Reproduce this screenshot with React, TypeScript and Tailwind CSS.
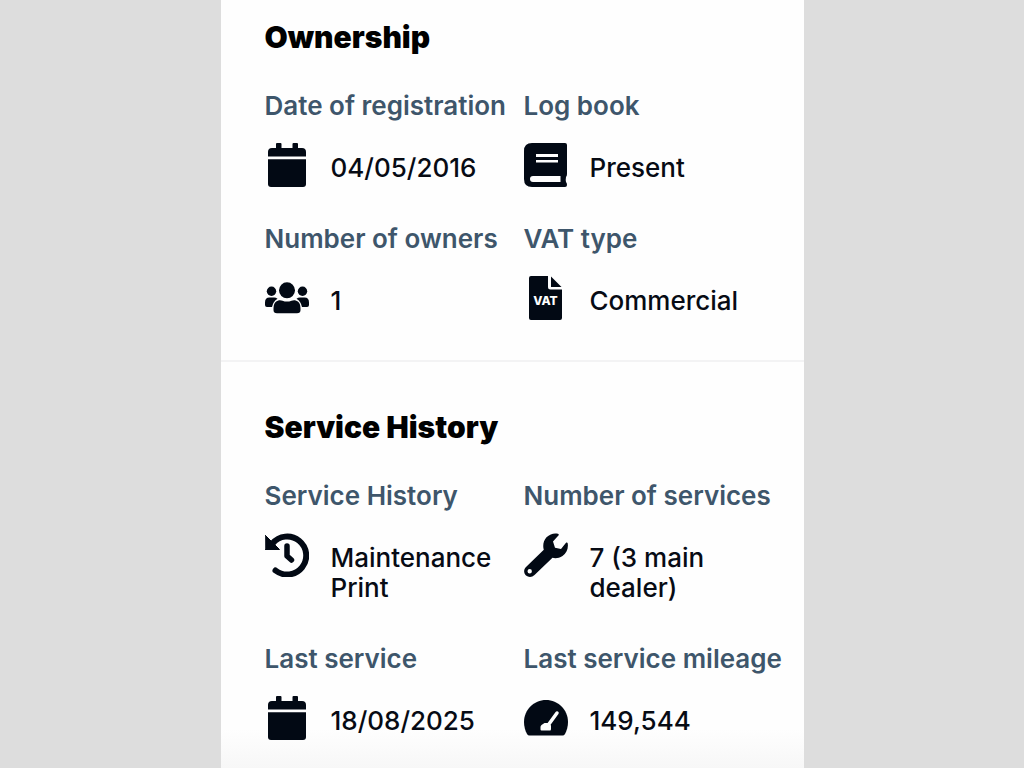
import React from 'react';

const iconClass = 'h-11 w-11 text-[#020914]';

const CalendarIcon = () => (
  <svg viewBox="0 0 44 44" className={iconClass} fill="currentColor" aria-hidden="true">
    <path d="M12 0H15.500Q16.500 0 16.500 1V5H27.500V1Q27.500 0 28.500 0H32Q33 0 33 1V5H37Q41 5 41 9V13.500H3V9Q3 5 7 5H11V1Q11 0 12 0Z" />
    <path d="M3 16.200H41V41Q41 44 38 44H6Q3 44 3 41Z" />
  </svg>
);

const BookIcon = () => (
  <svg viewBox="0 0 44 44" className={iconClass} fill="currentColor" aria-hidden="true">
    <path
      fillRule="evenodd"
      d="M8 0H41Q43 0 43 2V31Q43 33 42 34Q41.500 36.500 42 39Q43 40 43 42Q43 44 41 44H8Q0 44 0 36V8Q0 0 8 0ZM12 11V14H34V11ZM12 17V19.500H34V17ZM9 33Q6 33 6 36Q6 39 9 39H36.500V33Z"
    />
  </svg>
);

const UsersIcon = () => (
  <svg viewBox="0 0 44 44" className={iconClass} fill="currentColor" aria-hidden="true">
    <circle cx="22" cy="14.300" r="8" />
    <circle cx="6.500" cy="15.300" r="4.700" />
    <circle cx="37.500" cy="15.300" r="4.700" />
    <path d="M14 24.200Q16 24 17.500 24.700Q22 26.500 26.500 24.700Q28 24 30 24.200Q35.500 25.500 35.500 32V34Q35.500 37.300 32 37.300H12Q8.500 37.300 8.500 34V32Q8.500 25.500 14 24.200Z" />
    <path d="M4.500 21.500H9Q11 21.500 12.500 22.700Q8 25.500 7 31H2Q0 31 0 29V26.500Q0 21.500 4.500 21.500Z" />
    <path d="M39.500 21.500H35Q33 21.500 31.500 22.700Q36 25.500 37 31H42Q44 31 44 29V26.500Q44 21.500 39.500 21.500Z" />
  </svg>
);

const VatIcon = () => (
  <svg viewBox="0 0 44 44" className={iconClass} fill="currentColor" aria-hidden="true">
    <path d="M7 0H24V11Q24 13.500 26.500 13.500H38V42Q38 44 36 44H7Q5 44 5 42V2Q5 0 7 0Z" />
    <path d="M27 0.500L37.500 11H27Z" />
    <text x="21.500" y="28.500" textAnchor="middle" fill="#fefefe" className="font-['Inter'] text-[12px] font-extrabold">
      VAT
    </text>
  </svg>
);

const HistoryIcon = () => (
  <svg viewBox="0 0 44 44" className={iconClass} fill="none" stroke="currentColor" strokeLinecap="round" strokeLinejoin="round" aria-hidden="true">
    <path d="M7.500 10.500A19 19 0 1 1 10.500 37.500" strokeWidth="6" />
    <path d="M22 13V23L26.500 27" strokeWidth="5.500" />
    <path d="M0.500 2.500L14.500 16.500H0.500Z" fill="currentColor" strokeWidth="1" />
  </svg>
);

const WrenchIcon = () => (
  <svg viewBox="0 0 44 44" className={iconClass} fill="currentColor" aria-hidden="true">
    <path
      fillRule="evenodd"
      d="M34 0.800C35 1.200 35 2 34.400 2.600L29 8.500L31 14.800L37 16L42 9.700C42.600 9.100 43.500 9.400 43.700 10.200C44.600 15.500 42.500 20.500 38.500 23C35 25.200 31.500 25.800 28.500 24.800L10.500 42C8 44.500 4.500 44.500 2 42.500C-0.500 40 -0.500 36.500 2 34L19.800 16.800C18.500 12.500 19.500 7.500 22.500 4.200C26 0.800 30.500 -0.300 34 0.800ZM5.700 36A2.200 2.200 0 1 0 5.700 40.400A2.200 2.200 0 1 0 5.700 36Z"
    />
  </svg>
);

const GaugeIcon = () => (
  <svg viewBox="0 0 44 44" className={iconClass} aria-hidden="true">
    <path d="M22 4C9.800 4 0 13.800 0 26C0 30.200 1.100 34.400 3 38Q3.900 39.500 5.500 39.500H38.500Q40.100 39.500 41 38C42.900 34.400 44 30.200 44 26C44 13.800 34.200 4 22 4Z" fill="currentColor" />
    <path d="M33 17L25 28" stroke="#fefefe" strokeWidth="3.500" strokeLinecap="round" />
    <path d="M20.500 27H24.500L27 29.500V33Q27 34.500 26 34.500H17.500Q16.500 34.500 16.500 33.500V31Q16.500 30 17.500 29Z" fill="#fefefe" />
  </svg>
);

interface Detail {
  label: string;
  value: string;
  icon: React.ReactNode;
}

const ownership: Detail[] = [
  { label: 'Date of registration', value: '04/05/2016', icon: <CalendarIcon /> },
  { label: 'Log book', value: 'Present', icon: <BookIcon /> },
  { label: 'Number of owners', value: '1', icon: <UsersIcon /> },
  { label: 'VAT type', value: 'Commercial', icon: <VatIcon /> },
];

const serviceHistory: Detail[] = [
  { label: 'Service History', value: 'Maintenance Print', icon: <HistoryIcon /> },
  { label: 'Number of services', value: '7 (3 main dealer)', icon: <WrenchIcon /> },
  { label: 'Last service', value: '18/08/2025', icon: <CalendarIcon /> },
  { label: 'Last service mileage', value: '149,544', icon: <GaugeIcon /> },
];

const DetailSection: React.FC<{ title: string; items: Detail[] }> = ({ title, items }) => (
  <section className="pl-11 pr-[21px]">
    <h2 className="text-[30px] leading-10 font-black text-black">{title}</h2>
    <dl className="mt-[34px] grid grid-cols-2 gap-y-[37px]">
      {items.map((item) => (
        <div key={item.label}>
          <dt className="text-[26px] leading-[30px] font-semibold whitespace-nowrap text-[#3e566b]">{item.label}</dt>
          <dd className="mt-[22px] flex items-start gap-[22px]">
            <span className="shrink-0">{item.icon}</span>
            <span className="pt-[10px] pb-1 text-[26px] leading-[30px] font-medium text-[#070b14]">{item.value}</span>
          </dd>
        </div>
      ))}
    </dl>
  </section>
);

const App: React.FC = () => {
  return (
    <div className="h-screen overflow-hidden bg-[#dddddd] font-['Inter',sans-serif]">
      <main className="mx-auto min-h-full max-w-[583px] bg-linear-to-b from-[#fefefe] from-95% to-[#f7f7f7]">
        <div className="pt-[17px] pb-10">
          <DetailSection title="Ownership" items={ownership} />
        </div>
        <div className="border-t-2 border-[#f3f3f4] pt-[45px] pb-7">
          <DetailSection title="Service History" items={serviceHistory} />
        </div>
      </main>
    </div>
  );
};

export default App;
